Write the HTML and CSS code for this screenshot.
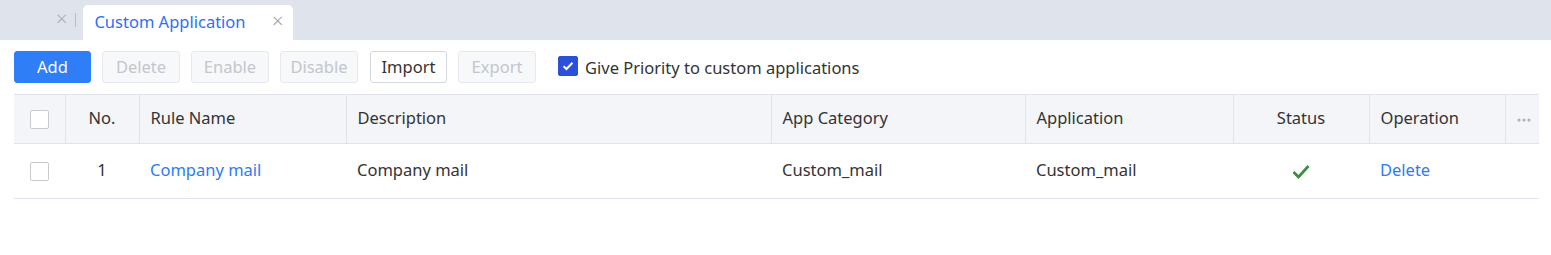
FILE: index.html
```html
<!DOCTYPE html>
<html lang="en">
  <head>
    <meta charset="UTF-8" />
    <title>Custom Application</title>
    <link rel="stylesheet" href="styles.css">
  </head>
  <body>
    <div class="tabbar">
      <span class="tab-close dim">&times;</span>
      <span class="tab-sep"></span>
      <div class="tab active">
        <span class="tab-title">Custom Application</span>
        <span class="tab-close">&times;</span>
      </div>
    </div>

    <div class="content">
      <div class="toolbar">
        <button class="btn primary">Add</button>
        <button class="btn disabled">Delete</button>
        <button class="btn disabled">Enable</button>
        <button class="btn disabled">Disable</button>
        <button class="btn plain">Import</button>
        <button class="btn disabled">Export</button>
        <label class="prio">
          <span class="cb checked">
            <svg width="12" height="10" viewBox="0 0 12 10"><path d="M1.5 5.2 L4.5 8 L10.5 1.8" fill="none" stroke="#fff" stroke-width="2"/></svg>
          </span>
          Give Priority to custom applications
        </label>
      </div>

      <table class="grid">
        <colgroup>
          <col style="width:51px">
          <col style="width:74px">
          <col style="width:207px">
          <col style="width:425px">
          <col style="width:254px">
          <col style="width:208px">
          <col style="width:136px">
          <col style="width:136px">
          <col style="width:34px">
        </colgroup>
        <thead>
          <tr>
            <th class="c-center"><span class="cb"></span></th>
            <th class="c-center">No.</th>
            <th>Rule Name</th>
            <th>Description</th>
            <th>App Category</th>
            <th>Application</th>
            <th class="c-center">Status</th>
            <th>Operation</th>
            <th class="c-center">
              <svg class="more" width="14" height="4" viewBox="0 0 14 4"><circle cx="2" cy="2" r="1.6"/><circle cx="7" cy="2" r="1.6"/><circle cx="12" cy="2" r="1.6"/></svg>
            </th>
          </tr>
        </thead>
        <tbody>
          <tr>
            <td class="c-center"><span class="cb"></span></td>
            <td class="c-center">1</td>
            <td><a class="link" href="#">Company mail</a></td>
            <td>Company mail</td>
            <td>Custom_mail</td>
            <td>Custom_mail</td>
            <td class="c-center">
              <svg width="18" height="15" viewBox="0 0 18 15"><path d="M1.5 8 L6.5 13 L16.5 2" fill="none" stroke="#3c8f3c" stroke-width="2.8"/></svg>
            </td>
            <td><a class="link" href="#">Delete</a></td>
            <td></td>
          </tr>
        </tbody>
      </table>
    </div>
  </body>
</html>
```

FILE: styles.css
```css
body {
  margin: 0;
  font-family: "Noto Sans", "Liberation Sans", sans-serif;
  font-size: 16.5px;
  color: #333;
  background: #fff;
}

/* tab strip */
.tabbar {
  height: 40px;
  background: #dfe3ec;
  display: flex;
  align-items: flex-end;
  padding-left: 56px;
}
.tab-close {
  font-size: 20px;
  font-weight: 300;
  line-height: 1;
  color: #9a9ca3;
  margin-bottom: 11px;
}
.tab-close.dim {
  color: #a9acb3;
}
.tab-sep {
  width: 1px;
  height: 14px;
  background: #b9bdc6;
  margin: 0 7px 13px 8px;
}
.tab {
  height: 35px;
  width: 210px;
  box-sizing: border-box;
  background: #fff;
  border-radius: 5px 5px 0 0;
  display: flex;
  align-items: center;
  justify-content: space-between;
  padding: 0 10px 3px 11px;
}
.tab-title {
  color: #2d6ff7;
}
.tab .tab-close {
  margin-bottom: 0;
}

.content {
  padding: 0 12px 0 14px;
}

/* toolbar */
.toolbar {
  display: flex;
  align-items: center;
  height: 32px;
  margin-top: 11px;
  margin-bottom: 11px;
}
.btn {
  height: 32px;
  width: 78px;
  margin-right: 11px;
  font-family: inherit;
  font-size: 16.5px;
  border-radius: 3px;
  border: 1px solid #e6e8ee;
  background: #f7f8fa;
  color: #c3c6cc;
  padding: 0 0 2px;
}
.btn.primary {
  width: 77px;
  background: #2f7ef8;
  border-color: #2f7ef8;
  color: #fff;
}
.btn.plain {
  width: 77px;
  background: #fff;
  border-color: #d5d8de;
  color: #333;
  margin-left: 1px;
}
.prio {
  display: flex;
  align-items: center;
  margin-left: 11px;
  color: #333;
}
.cb {
  display: inline-flex;
  align-items: center;
  justify-content: center;
  width: 19px;
  height: 19px;
  box-sizing: border-box;
  border: 1.5px solid #c9cace;
  border-radius: 2px;
  background: #fff;
  vertical-align: middle;
}
.cb.checked {
  width: 20px;
  height: 20px;
  background: #2a51d8;
  border-color: #2a51d8;
  margin-right: 7px;
  margin-bottom: 2px;
}

/* table */
.grid {
  width: 1525px;
  border-collapse: collapse;
  table-layout: fixed;
}
.grid th {
  background: #f4f5f9;
  font-weight: normal;
  text-align: left;
  height: 45px;
  padding: 0 11px 3px;
  border-top: 1px solid #e1e3ec;
  border-bottom: 1px solid #e1e3ec;
  border-left: 1px solid #e1e3ec;
}
.grid th:first-child {
  border-left: none;
}
.grid td {
  height: 50px;
  padding: 0 11px 4px;
  border-bottom: 1px solid #e1e3ec;
}
.grid .c-center {
  text-align: center;
}
.grid td svg,
.grid th svg {
  vertical-align: middle;
}
.link {
  color: #2d7bf7;
  text-decoration: none;
}
.more {
  fill: #aeb1b8;
}
```
